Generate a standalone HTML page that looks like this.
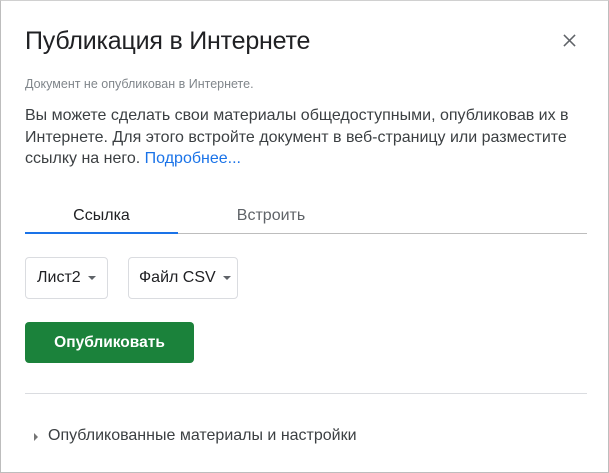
<!DOCTYPE html>
<html><head><meta charset="utf-8"><style>
*{margin:0;padding:0;box-sizing:border-box}
body{width:609px;height:473px;background:#fff;font-family:"Liberation Sans",sans-serif;position:relative;overflow:hidden}
.frame{position:absolute;left:0;top:0;width:609px;height:473px;border:1px solid #bdbdbd;border-top-color:#d0d0d0}
.abs{position:absolute;white-space:nowrap}
</style></head><body>
<div class="abs" style="left:25px;top:27px;font-size:25px;color:#202124;letter-spacing:-0.2px">Публикация в Интернете</div>
<svg class="abs" style="left:563px;top:34px" width="13" height="13" viewBox="0 0 14 14"><path d="M1 1L13 13M13 1L1 13" stroke="#5f6368" stroke-width="1.6"/></svg>
<div class="abs" style="left:25px;top:77px;font-size:12.5px;color:#80868b">Документ не опубликован в Интернете.</div>
<div class="abs" style="left:25px;top:105px;font-size:16px;line-height:21.5px;color:#3c4043;white-space:normal;width:575px">Вы можете сделать свои материалы общедоступными, опубликовав их в<br>Интернете. Для этого встройте документ в веб-страницу или разместите<br>ссылку на него. <span style="color:#1a73e8">Подробнее...</span></div>
<div class="abs" style="left:25px;top:207px;width:153px;text-align:center;font-size:16px;color:#202124">Ссылка</div>
<div class="abs" style="left:178px;top:207px;width:186px;text-align:center;font-size:16px;color:#5f6368">Встроить</div>
<div class="abs" style="left:25px;top:233px;width:562px;height:1px;background:#bdbdbd"></div>
<div class="abs" style="left:25px;top:232px;width:153px;height:2px;background:#1a73e8"></div>
<div class="abs" style="left:25px;top:257px;width:83px;height:42px;border:1px solid #dadce0;border-radius:4px;font-size:16px;color:#202124;padding:11px 0 0 11px">Лист2<span style="display:inline-block;margin-left:7px;border-left:4.5px solid transparent;border-right:4.5px solid transparent;border-top:4.5px solid #5f6368;vertical-align:middle"></span></div>
<div class="abs" style="left:128px;top:257px;width:110px;height:42px;border:1px solid #dadce0;border-radius:4px;font-size:16px;color:#202124;padding:11px 0 0 10px">Файл CSV<span style="display:inline-block;margin-left:7px;border-left:4.5px solid transparent;border-right:4.5px solid transparent;border-top:4.5px solid #5f6368;vertical-align:middle"></span></div>
<div class="abs" style="left:25px;top:322px;width:169px;height:41px;background:#1b823b;border-radius:4px;color:#fff;font-weight:bold;font-size:15.5px;text-align:center;line-height:41px">Опубликовать</div>
<div class="abs" style="left:25px;top:393px;width:562px;height:1px;background:#dadce0"></div>
<div class="abs" style="left:34px;top:433px;border-top:4px solid transparent;border-bottom:4px solid transparent;border-left:4px solid #757575"></div>
<div class="abs" style="left:48px;top:427px;font-size:16px;color:#3c4043">Опубликованные материалы и настройки</div>
<div class="frame"></div>
</body></html>
